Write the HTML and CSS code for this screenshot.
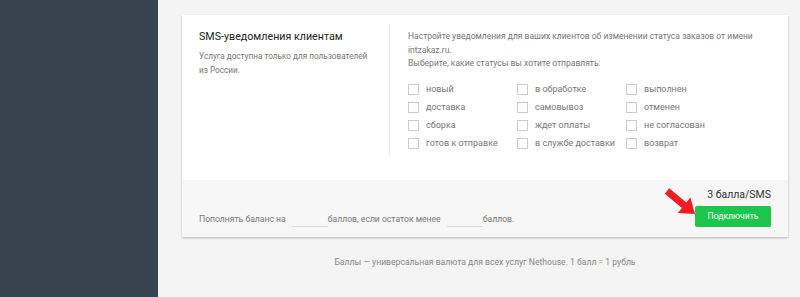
FILE: index.html
```html
<!DOCTYPE html>
<html lang="ru">
<head>
    <meta charset="UTF-8">
    <title>SMS-уведомления клиентам</title>
    <link rel="stylesheet" href="styles.css">
</head>
<body>
    <div class="layout">
        <div class="sidebar"></div>
        <div class="main">
            <div class="card">
                <div class="card-body">
                    <div class="col-info">
                        <h2>SMS-уведомления клиентам</h2>
                        <p class="hint">Услуга доступна только для пользователей из России.</p>
                    </div>
                    <div class="col-settings">
                        <p>Настройте уведомления для ваших клиентов об изменении статуса заказов от имени intzakaz.ru.</p>
                        <p>Выберите, какие статусы вы хотите отправлять:</p>
                        <div class="statuses">
                            <label class="check"><input type="checkbox"><span>новый</span></label>
                            <label class="check"><input type="checkbox"><span>в обработке</span></label>
                            <label class="check"><input type="checkbox"><span>выполнен</span></label>
                            <label class="check"><input type="checkbox"><span>доставка</span></label>
                            <label class="check"><input type="checkbox"><span>самовывоз</span></label>
                            <label class="check"><input type="checkbox"><span>отменен</span></label>
                            <label class="check"><input type="checkbox"><span>сборка</span></label>
                            <label class="check"><input type="checkbox"><span>ждет оплаты</span></label>
                            <label class="check"><input type="checkbox"><span>не согласован</span></label>
                            <label class="check"><input type="checkbox"><span>готов к отправке</span></label>
                            <label class="check"><input type="checkbox"><span>в службе доставки</span></label>
                            <label class="check"><input type="checkbox"><span>возврат</span></label>
                        </div>
                    </div>
                </div>
                <div class="card-footer">
                    <div class="refill">Пополнять баланс на <input type="text" class="line-input">баллов, если остаток менее <input type="text" class="line-input">баллов.</div>
                    <div class="connect">
                        <div class="price">3 балла/SMS</div>
                        <button class="btn-green">Подключить</button>
                        <svg class="arrow" width="40" height="42" viewBox="0 0 40 42">
                            <polygon points="8.2,3.3 25.3,17.5 29.4,12.4 34,29 16.8,28 20.9,22.9 3.8,8.7" fill="#f21d22"/>
                        </svg>
                    </div>
                </div>
            </div>
            <p class="note">Баллы — универсальная валюта для всех услуг Nethouse. 1 балл = 1 рубль</p>
        </div>
    </div>
</body>
</html>
```

FILE: styles.css
```css
body {
    margin: 0;
    font-family: Roboto, "Liberation Sans", Arial, sans-serif;
    background-color: #f4f4f4;
    color: #777;
    font-size: 8.6px;
}

.layout {
    display: flex;
    height: 297px;
}

.sidebar {
    width: 158px;
    flex-shrink: 0;
    background-color: #37444f;
}

.main {
    flex: 1;
    padding: 15px 12px 0 24px;
}

.card {
    background-color: #fff;
    box-shadow: 0 1px 2px rgba(0, 0, 0, 0.25);
}

.card-body {
    display: flex;
    padding: 9px 0 25px;
}

.col-info {
    width: 172px;
    padding: 6px 18px 0 17px;
    border-right: 1px solid #e8e8e8;
}

.col-info h2 {
    margin: 0 0 5px;
    font-size: 10.7px;
    line-height: 14px;
    font-weight: 400;
    color: #222;
}

.hint {
    margin: 0;
    font-size: 8.2px;
    line-height: 14px;
}

.col-settings {
    flex: 1;
    padding: 6px 10px 6px 18px;
}

.col-settings p {
    margin: 0;
    font-size: 8.5px;
    line-height: 13.5px;
    width: 362px;
}

.statuses {
    display: grid;
    grid-template-columns: 109px 109px 1fr;
    row-gap: 7px;
    margin-top: 13px;
    font-size: 9px;
}

.check {
    display: flex;
    align-items: center;
    height: 11px;
}

.check input {
    appearance: none;
    width: 11px;
    height: 11px;
    margin: 0 7px 0 0;
    border: 1px solid #ccc;
    background: #fff;
}

.card-footer {
    display: flex;
    justify-content: space-between;
    align-items: flex-end;
    background-color: #f7f7f7;
    padding: 9px 17px 10px;
}

.refill {
    line-height: 16px;
}

.line-input {
    width: 36px;
    height: 15px;
    margin: 0 0 0 4px;
    padding: 0;
    border: none;
    border-bottom: 1px solid #ddd;
    background: transparent;
    vertical-align: bottom;
}

.connect {
    position: relative;
    text-align: right;
}

.price {
    font-size: 10.5px;
    line-height: 12px;
    color: #333;
    margin-bottom: 5px;
}

.btn-green {
    display: block;
    background-color: #1dc44e;
    color: #fff;
    border: none;
    border-radius: 2px;
    font-family: inherit;
    font-size: 8.6px;
    width: 76px;
    height: 21px;
    padding: 0;
}

.arrow {
    position: absolute;
    left: -34px;
    bottom: 0;
}

.note {
    text-align: center;
    margin: 20px 0 0;
    line-height: 10px;
    color: #888;
}
```
